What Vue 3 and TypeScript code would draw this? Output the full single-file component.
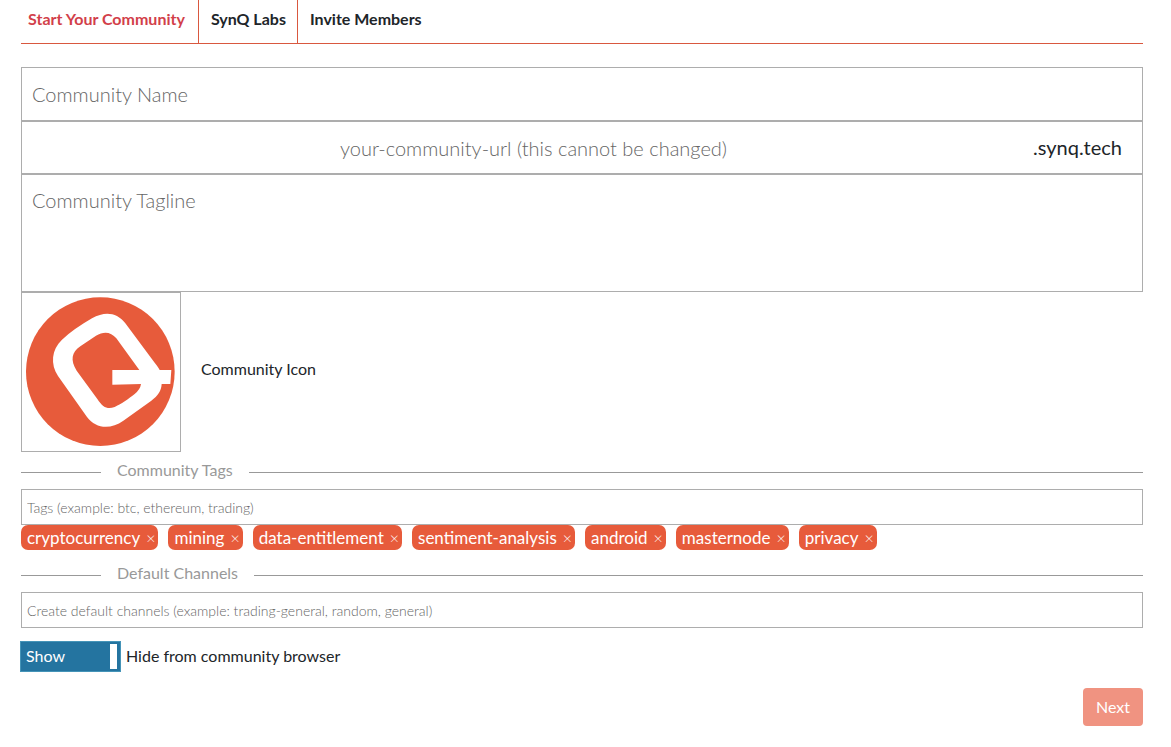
<script setup lang="ts">
import { ref } from 'vue'

const tabs: string[] = ['Start Your Community', 'SynQ Labs', 'Invite Members']
const activeTab = ref(0)

const name = ref('')
const url = ref('')
const tagline = ref('')
const tagDraft = ref('')
const channelDraft = ref('')
const visible = ref(true)

const tags = ref<string[]>([
  'cryptocurrency',
  'mining',
  'data-entitlement',
  'sentiment-analysis',
  'android',
  'masternode',
  'privacy',
])

function addTag() {
  const tag = tagDraft.value.trim()
  if (tag && !tags.value.includes(tag)) tags.value.push(tag)
  tagDraft.value = ''
}

function removeTag(tag: string) {
  tags.value = tags.value.filter((t) => t !== tag)
}
</script>

<template>
  <main class="page">
    <nav class="tabs">
      <button
        v-for="(tab, i) in tabs"
        :key="tab"
        type="button"
        class="tab"
        :class="{ active: i === activeTab }"
        @click="activeTab = i"
      >{{ tab }}</button>
    </nav>

    <form class="form" @submit.prevent>
      <input v-model="name" class="field large" type="text" placeholder="Community Name" aria-label="Community Name" />
      <div class="url-row">
        <input
          v-model="url"
          class="url-input"
          type="text"
          placeholder="your-community-url (this cannot be changed)"
          aria-label="Community URL"
        />
        <span class="domain">.synq.tech</span>
      </div>
      <textarea v-model="tagline" class="field tagline" placeholder="Community Tagline" aria-label="Community Tagline"></textarea>

      <div class="icon-row">
        <button type="button" class="icon-box" aria-labelledby="icon-label">
          <svg viewBox="36 24 474 474" aria-hidden="true">
            <circle cx="271" cy="260" r="223" fill="#e75b3b" />
            <path
              fill="#fff"
              fill-rule="evenodd"
              d="M246 100C285 78 320 82 346 115L434 233Q446 248 449 255H484L481 297H455C454 317 444 332 424 347L340 407C301 435 257 431 231 396L144 273C121 238 124 194 156 164Q192 131 246 100ZM258 152L211 184C185 202 180 225 200 257L262 342C279 368 293 374 314 366C332 358 357 341 374 327Q391 313 393 297L307 299V255H388L319 160C303 140 281 138 258 152Z"
            />
          </svg>
        </button>
        <span id="icon-label">Community Icon</span>
      </div>

      <section>
        <h2 class="divider"><label for="tags">Community Tags</label></h2>
        <input
          id="tags"
          v-model="tagDraft"
          class="field small"
          type="text"
          placeholder="Tags (example: btc, ethereum, trading)"
          @keydown.enter.prevent="addTag"
        />
        <ul class="tags">
          <li v-for="tag in tags" :key="tag" class="tag">
            {{ tag }}
            <button type="button" class="remove" :aria-label="`Remove ${tag}`" @click="removeTag(tag)">×</button>
          </li>
        </ul>
      </section>

      <section>
        <h2 class="divider"><label for="channels">Default Channels</label></h2>
        <input
          id="channels"
          v-model="channelDraft"
          class="field small"
          type="text"
          placeholder="Create default channels (example: trading-general, random, general)"
        />
      </section>

      <label class="visibility">
        <span class="switch" :class="{ off: !visible }">
          <input v-model="visible" type="checkbox" role="switch" />
          <span class="text">{{ visible ? 'Show' : 'Hide' }}</span>
          <span class="knob"></span>
        </span>
        <span class="text">Hide from community browser</span>
      </label>

      <div class="actions">
        <button type="submit" class="next" disabled>Next</button>
      </div>
    </form>
  </main>
</template>

<style>
body {
  margin: 0;
  background: #fff;
}
</style>

<style scoped>
.page,
.page * {
  box-sizing: border-box;
}

.page {
  padding: 0 28px 20px 21px;
  font-family: Lato, "Liberation Sans", sans-serif;
  font-size: 16px;
  line-height: 24px;
  color: #212529;
}

button,
input,
textarea {
  margin: 0;
  font: inherit;
  color: inherit;
}

button {
  cursor: pointer;
}

.tabs {
  display: flex;
  height: 44px;
  border-bottom: 1px solid #d9583f;
}

.tab {
  padding: 0 11px 6px 12px;
  border: 0;
  border-right: 1px solid #d9583f;
  background: none;
  font-weight: 700;
}

.tab:first-child {
  padding-right: 13px;
  padding-left: 7px;
}

.tab:last-child {
  border-right: 0;
}

.tab.active {
  color: #d23f4a;
}

.form {
  display: flex;
  flex-direction: column;
  margin-top: 23px;
}

.field {
  display: block;
  width: 100%;
  border: 1px solid #adadad;
  border-radius: 0;
  background: #fff;
  outline: 0;
}

::placeholder {
  color: #666;
  opacity: 1;
}

.large,
.tagline,
.url-input {
  font-size: 20px;
  font-weight: 300;
}

.large {
  height: 54px;
  padding: 0 10px;
}

.url-row {
  display: flex;
  align-items: center;
  height: 53px;
  padding: 0 20px 2px 0;
  border: 1px solid #adadad;
  font-size: 20px;
}

.url-input {
  flex: 1;
  min-width: 0;
  padding: 2px 0 0 12px;
  border: 0;
  background: none;
  outline: 0;
  text-align: center;
}

.tagline {
  height: 118px;
  padding: 13px 10px;
  resize: none;
}

.icon-row {
  display: flex;
  align-items: center;
  gap: 20px;
}

.icon-row > span {
  padding-bottom: 6px;
}

.icon-box {
  width: 160px;
  height: 160px;
  padding: 0;
  border: 1px solid #adadad;
  background: #fff;
}

.icon-box svg {
  display: block;
  width: 100%;
}

.divider {
  display: flex;
  align-items: center;
  gap: 16px;
  height: 37px;
  margin: 0;
  font-size: 16px;
  font-weight: 400;
  color: #999;
}

.divider label {
  padding-bottom: 2px;
}

.divider::before,
.divider::after {
  content: "";
  height: 1px;
  margin-top: 4px;
  background: #999;
}

.divider::before {
  width: 80px;
}

.divider::after {
  flex: 1;
}

.small {
  height: 36px;
  padding: 0 5px;
  font-size: 14px;
  font-weight: 300;
}

.tags {
  display: flex;
  flex-wrap: wrap;
  gap: 10px;
  margin: 0 0 5px;
  padding: 0;
  list-style: none;
}

.tag {
  display: flex;
  align-items: center;
  gap: 6px;
  height: 25px;
  padding: 0 3px 0 6px;
  border-radius: 7px;
  background: #e75b3b;
  font-size: 17px;
  color: #fff;
}

.remove {
  padding: 0;
  border: 0;
  background: none;
  font-weight: 300;
  font-size: 16px;
  line-height: 24px;
}

.visibility {
  display: flex;
  align-items: center;
  align-self: flex-start;
  gap: 5px;
  margin: 13px 0 0 -1px;
}

.text {
  padding-bottom: 2px;
}

.switch {
  display: flex;
  align-items: center;
  justify-content: space-between;
  width: 101px;
  height: 31px;
  padding: 0 3px 0 5px;
  border: 1px solid #4594b8;
  background: #2474a0;
  color: #fff;
}

.switch input {
  position: absolute;
  opacity: 0;
}

.switch.off {
  flex-direction: row-reverse;
}

.knob {
  width: 7px;
  height: 25px;
  background: #fff;
}

.actions {
  display: flex;
  justify-content: flex-end;
  margin-top: 16px;
}

.next {
  height: 38px;
  padding: 0 13px;
  border: 0;
  border-radius: 4px;
  background: #f09381;
  color: #fff;
}
</style>
